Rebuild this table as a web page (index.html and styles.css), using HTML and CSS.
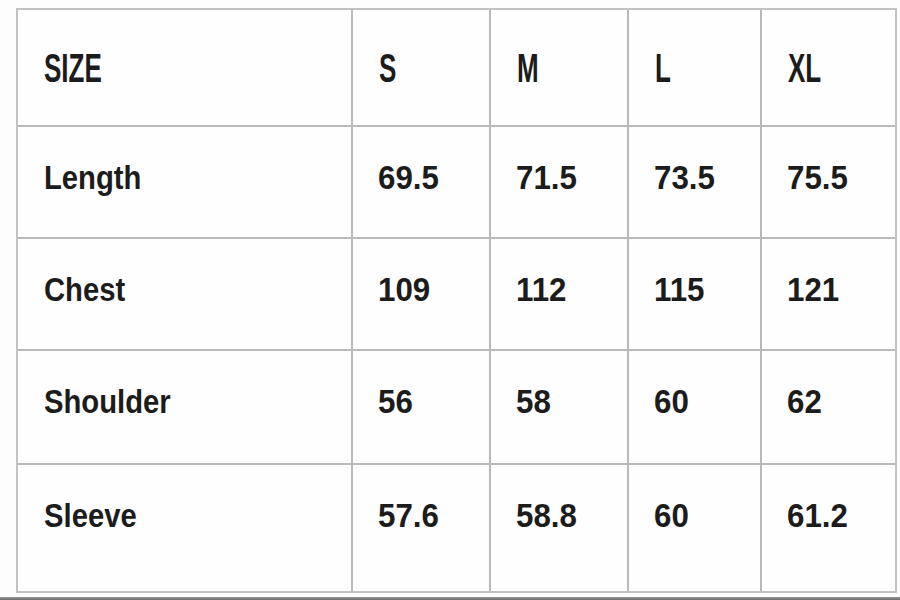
FILE: index.html
```html
<!DOCTYPE html>
<html lang="en">
<head>
<meta charset="utf-8">
<title>Size chart</title>
<link rel="stylesheet" href="styles.css">
</head>
<body>
<div class="chart">
  <div class="cell head"><span class="h">SIZE</span></div>
  <div class="cell head"><span class="h">S</span></div>
  <div class="cell head"><span class="h">M</span></div>
  <div class="cell head"><span class="h">L</span></div>
  <div class="cell head"><span class="h">XL</span></div>

  <div class="cell label"><span class="t">Length</span></div>
  <div class="cell num"><span class="n">69.5</span></div>
  <div class="cell num"><span class="n">71.5</span></div>
  <div class="cell num"><span class="n">73.5</span></div>
  <div class="cell num"><span class="n">75.5</span></div>

  <div class="cell label"><span class="t">Chest</span></div>
  <div class="cell num"><span class="n">109</span></div>
  <div class="cell num"><span class="n">112</span></div>
  <div class="cell num"><span class="n">115</span></div>
  <div class="cell num"><span class="n">121</span></div>

  <div class="cell label"><span class="t">Shoulder</span></div>
  <div class="cell num"><span class="n">56</span></div>
  <div class="cell num"><span class="n">58</span></div>
  <div class="cell num"><span class="n">60</span></div>
  <div class="cell num"><span class="n">62</span></div>

  <div class="cell label"><span class="t">Sleeve</span></div>
  <div class="cell num"><span class="n">57.6</span></div>
  <div class="cell num"><span class="n">58.8</span></div>
  <div class="cell num"><span class="n">60</span></div>
  <div class="cell num"><span class="n">61.2</span></div>
</div>
<div class="edge"></div>
</body>
</html>
```
FILE: styles.css
```css
html, body {
  margin: 0;
  padding: 0;
  background: #fdfdfd;
}
body {
  width: 900px;
  height: 600px;
  overflow: hidden;
  position: relative;
  font-family: "Liberation Sans", Arial, sans-serif;
  font-weight: bold;
  color: #1c1c1c;
}
.chart {
  margin: 8px 0 0 16px;
  width: 881px;
  height: 585px;
  display: grid;
  grid-template-columns: 333px 136px 136px 131px 133px;
  grid-template-rows: 115px 110px 110px 112px 126px;
  gap: 2px;
  border: 2px solid #c2c2c2;
  background: #b9b9b9;
  box-sizing: border-box;
}
.cell {
  background: #fefefe;
  padding-left: 26px;
  display: flex;
  align-items: flex-start;
  font-size: 34px;
  line-height: 1;
  padding-top: 33px;
  box-sizing: border-box;
}
.head {
  align-items: center;
  padding-top: 0;
  font-size: 40px;
}
.h, .t, .n {
  display: inline-block;
  transform-origin: left center;
  white-space: nowrap;
}
.h {
  transform: scaleX(0.65);
}
.t {
  transform: scaleX(0.86);
}
.n {
  transform: scaleX(0.92);
}
.num {
  padding-left: 25px;
}
.edge {
  position: absolute;
  left: 0;
  right: 0;
  top: 597px;
  height: 3px;
  background: linear-gradient(#9a9a9a, #6a6a6a);
}
```
